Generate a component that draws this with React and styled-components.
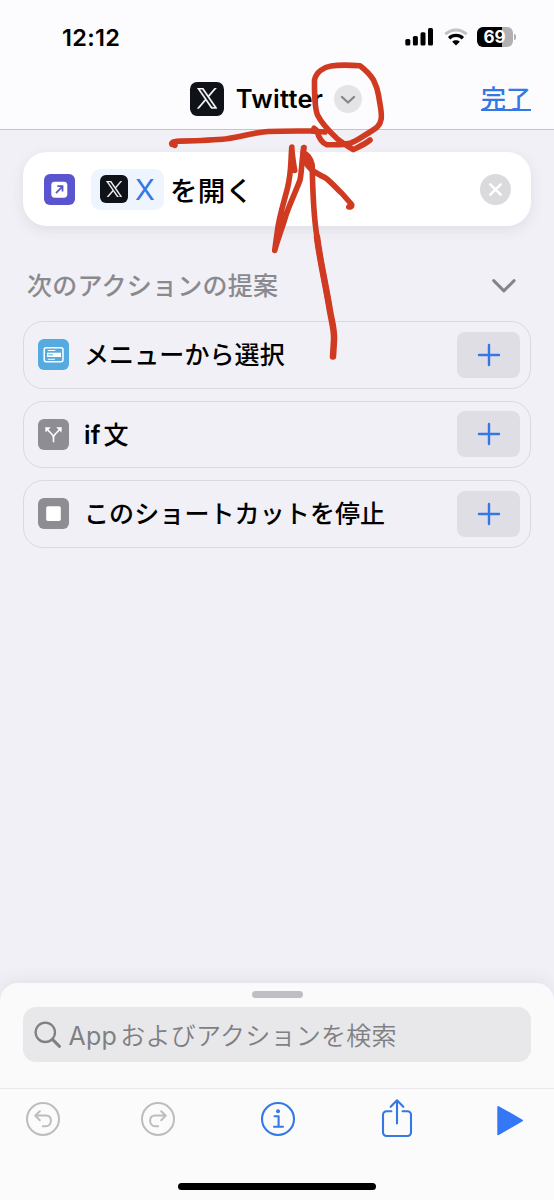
import React from 'react';
import styled, {createGlobalStyle} from 'styled-components';

const suggestions = [
    {id: 'menu', label: 'メニューから選択', color: '#55aadf', Icon: MenuGlyph},
    {id: 'if', latin: 'if', label: '文', color: '#8e8d93', Icon: BranchGlyph},
    {id: 'stop', label: 'このショートカットを停止', color: '#8e8d93', Icon: StopGlyph},
];

function XLogo({size}){
    return(
        <XBox $size={size}>
            <svg width='60%' height='60%' viewBox='0 0 24 24' fill='#fff' stroke='#fff' strokeWidth='.5'>
                <path d='M14.23 10.16 22.98 0h-2.07l-7.6 8.82L7.25 0H.26l9.17 13.34L.26 24h2.07l8.02-9.32L16.76 24h6.98zM11.39 13.46l-.93-1.33L3.07 1.56h3.18l5.97 8.54.93 1.33 7.76 11.1h-3.18z'/>
            </svg>
        </XBox>
    );
}

function MenuGlyph(){
    return(
        <svg width='31' height='31' viewBox='0 0 31 31' fill='none'>
            <rect x='6.2' y='8.7' width='18.8' height='14' rx='2' stroke='#fff' strokeWidth='1.5'/>
            <rect x='9' y='13.7' width='14' height='4.3' fill='#fff'/>
            <path d='M9.8 11.5h7.5M9.8 20.2h7.2' stroke='#fff' strokeWidth='1.1'/>
            <path d='M10.2 15.8h4.8' stroke='#55aadf' strokeWidth='1'/>
        </svg>
    );
}

function BranchGlyph(){
    return(
        <svg width='31' height='31' viewBox='0 0 31 31' fill='none'>
            <path d='M15.5 23.3V18.7C15.5 16.8 14.7 15.9 13.5 14.7L9.8 11M15.5 18.7C15.5 16.8 16.3 15.9 17.5 14.7L21.2 11' stroke='#fff' strokeWidth='1.6'/>
            <path d='M7.2 8.2h5.6L7.6 13.6zM23.8 8.2h-5.6l5.2 5.4z' fill='#fff'/>
        </svg>
    );
}

function StopGlyph(){
    return(
        <svg width='31' height='31' viewBox='0 0 31 31'>
            <rect x='8.2' y='8.3' width='14.6' height='14.6' rx='1.6' fill='#fff'/>
        </svg>
    );
}

function StatusBar(){
    return(
        <Status>
            <Clock>12:12</Clock>
            <StatusIcons>
                <svg width='29' height='18' viewBox='0 0 29 18'>
                    <rect x='.3' y='11' width='5' height='6.4' rx='1.5'/>
                    <rect x='7.9' y='8' width='5' height='9.4' rx='1.5'/>
                    <rect x='15.5' y='4.2' width='5' height='13.2' rx='1.5'/>
                    <rect x='23' y='0' width='5' height='17.4' rx='1.5'/>
                </svg>
                <svg width='24' height='18' viewBox='0 0 24 18' fill='none'>
                    <path d='M1.3 6.2C7.5.5 16.5.5 22.7 6.2' stroke='#c1c1c3' strokeWidth='3'/>
                    <path d='M5.1 10.2C9 6.5 15 6.5 18.9 10.2' stroke='#000' strokeWidth='3.3'/>
                    <path d='M8.2 13.7C10.3 11.8 13.7 11.8 15.8 13.7L12 17.4z' fill='#000'/>
                </svg>
                <Battery>69</Battery>
            </StatusIcons>
        </Status>
    );
}

function Toolbar(){
    return(
        <Tools>
            <svg width='36' height='40' viewBox='0 0 36 40' fill='none' stroke='#bdbdbf' strokeWidth='2' strokeLinecap='round' strokeLinejoin='round'>
                <circle cx='18' cy='20' r='16'/>
                <path d='M14.8 12.2 10.2 16.6 14.8 21.2M10.6 16.6h10.2c3.2 0 5.1 2.1 5.1 5.2s-2 5.4-5.1 5.4h-3'/>
            </svg>
            <svg width='36' height='40' viewBox='0 0 36 40' fill='none' stroke='#bdbdbf' strokeWidth='2' strokeLinecap='round' strokeLinejoin='round'>
                <circle cx='18' cy='20' r='16'/>
                <path d='M21.2 12.2 25.8 16.6 21.2 21.2M25.4 16.6H15.2c-3.2 0-5.1 2.1-5.1 5.2s2 5.4 5.1 5.4h3'/>
            </svg>
            <svg width='36' height='40' viewBox='0 0 36 40' fill='none' stroke='#3478e5' strokeWidth='2.1' strokeLinecap='round' strokeLinejoin='round'>
                <circle cx='18' cy='20' r='16'/>
                <path d='M14.6 17.2h4v10.3M14 27.7h9'/>
                <circle cx='18' cy='12.2' r='2' fill='#3478e5' stroke='none'/>
            </svg>
            <svg width='36' height='40' viewBox='0 0 36 40' fill='none' stroke='#3478e5' strokeWidth='2.1' strokeLinecap='round' strokeLinejoin='round'>
                <path d='M12.4 12.2H7.6a3.6 3.6 0 0 0-3.6 3.6v17.6A3.6 3.6 0 0 0 7.6 37h20.8a3.6 3.6 0 0 0 3.6-3.6V15.8a3.6 3.6 0 0 0-3.6-3.6h-4.8M18 24.5V1.5M11.7 7.8 18 1.3l6.3 6.5'/>
            </svg>
            <svg width='36' height='40' viewBox='0 0 36 40' fill='#3478f6' stroke='#3478f6' strokeWidth='2' strokeLinejoin='round'>
                <path d='M7.3 8 31 21.5 7.3 35.2z'/>
            </svg>
        </Tools>
    );
}

// red pen strokes over the header and the action card
function PenMarks(){
    return(
        <Marks width='554' height='400' viewBox='0 0 554 400'>
            <path d='M175 145.3 172 144.4C171 142.4 173.5 141.4 177 141.2 194 140.8 211 140.5 226.7 138.8 244 136.5 253 132.5 268 131.5 283 130.8 297 131 310 131L325 132'/>
            <path d='M370 140C364 145 357 147.5 353.3 149.6 345 144.5 341 142 336.7 138.3 329 131 322 124 317.5 115 314 106 314.5 90 314.5 80 316 72 324 67 331 66 340 64.6 350 65 360 65.7 367 71 371 76 373.5 80 378 89 378 92 379 98 380 105 382 112 381.2 119 380 126 376 128.5 370 132 363 136 357 141 350 143.3 342 145.2 334 145 326.7 144.6 322 143 319 138 317.3 132 316.5 129.8 315.5 129 314 128.2'/>
            <path d='M294.7 170.5C293.5 163 292 155 291.8 147 290.5 162 291.5 172 287.5 188 284 202 279.5 215 277.5 230L274.7 250.5C278 238 283 226 286 215 290 203 296 191 300 180 301.7 173 301.5 160 304 147.6'/>
            <path d='M303.5 148 303.2 156C305 162 308 167 312 170 318 175 323 176 327 179 333 184 337 189 342 193.5L351.7 204.5C352 207 350 207.2 348.8 206.8'/>
            <path d='M303.5 153C309 155 311 160 312.2 165 312.6 189 313 213 317 237 320 261 326 286 329.8 310'/>
            <path d='M317 237C320 261 326 286 329.8 310 332.5 325 334.5 330 334 340L333 356.5' strokeWidth='6.5'/>
        </Marks>
    );
}

function App(){
    return(
        <Screen>
            <GlobalStyle/>
            <Header>
                <StatusBar/>
                <TitleBar>
                    <span/>
                    <TitleGroup>
                        <XLogo size={34}/>
                        <Title>Twitter</Title>
                        <TitleMenu>
                            <svg width='28' height='28' viewBox='0 0 28 28' fill='none' stroke='#858589' strokeWidth='2.3' strokeLinecap='round' strokeLinejoin='round'>
                                <path d='m8 12 6 5.5 6-5.5'/>
                            </svg>
                        </TitleMenu>
                    </TitleGroup>
                    <Done>完了</Done>
                </TitleBar>
            </Header>
            <Main>
                <ActionCard>
                    <IconTile $color='#5a55ce'>
                        <svg width='31' height='31' viewBox='0 0 31 31' fill='none'>
                            <rect x='7.3' y='7.7' width='16' height='16' rx='3.4' fill='#fff'/>
                            <path d='m12 19.2 6.2-6.5M13.3 12.2h5.2v5.4' stroke='#5a55ce' strokeWidth='1.8'/>
                        </svg>
                    </IconTile>
                    <AppToken>
                        <XLogo size={28}/>
                        <span>X</span>
                    </AppToken>
                    <ActionText>を開く</ActionText>
                    <Remove>
                        <svg width='31' height='31' viewBox='0 0 31 31' fill='none' stroke='#fff' strokeWidth='2.5' strokeLinecap='round'>
                            <path d='m10.3 10.3 10.4 10.4M20.7 10.3 10.3 20.7'/>
                        </svg>
                    </Remove>
                </ActionCard>
                <SectionHead>
                    <SectionTitle>次のアクションの提案</SectionTitle>
                    <svg width='24' height='14' viewBox='0 0 24 14' fill='none' stroke='#858589' strokeWidth='3' strokeLinecap='round' strokeLinejoin='round'>
                        <path d='m1.7 1.6 10.2 10.3L22.1 1.6'/>
                    </svg>
                </SectionHead>
                <List>
                    {suggestions.map(({id, latin, label, color, Icon}) => (
                        <Row key={id}>
                            <IconTile $color={color}><Icon/></IconTile>
                            <RowLabel>{latin && <Latin $weight={600}>{latin}</Latin>}{label}</RowLabel>
                            <AddButton>
                                <svg width='24' height='24' viewBox='0 0 24 24' stroke='#3478e5' strokeWidth='2.4' strokeLinecap='round'>
                                    <path d='M12 2v20M2 12h20'/>
                                </svg>
                            </AddButton>
                        </Row>
                    ))}
                </List>
            </Main>
            <Sheet>
                <Grabber/>
                <Search>
                    <svg width='28' height='28' viewBox='0 0 28 28' fill='none' stroke='#7f7f84' strokeLinecap='round'>
                        <circle cx='11.3' cy='11.3' r='9.7' strokeWidth='2.3'/>
                        <path d='m18.7 18.7 6.8 6.6' strokeWidth='3'/>
                    </svg>
                    <SearchText><Latin $weight={400}>App</Latin>およびアクションを検索</SearchText>
                </Search>
            </Sheet>
            <Footer>
                <Toolbar/>
                <HomeBar/>
            </Footer>
            <PenMarks/>
        </Screen>
    );
}

export default App;

const GlobalStyle = createGlobalStyle`
 *{box-sizing:border-box;}
 body{
  margin:0;
  font-family:Inter, 'Noto Sans CJK JP', sans-serif;
  color:#000;
 }
 svg{display:block;flex:none;}
`

const Screen = styled.div`
 position:relative;
 width:554px;
 height:1200px;
 display:flex;
 flex-direction:column;
 background:#f1f0f6;
 overflow:hidden;
 white-space:nowrap;
`

const Header = styled.header`
 height:130px;
 background:#fcfcfe;
 border-bottom:1px solid #c5c5c9;
`

const Status = styled.div`
 height:74px;
 padding:0 41px 0 62px;
 display:flex;
 align-items:center;
 justify-content:space-between;
`

const Clock = styled.div`
 font-size:23.5px;
 font-weight:600;
 letter-spacing:0.3px;
`

const StatusIcons = styled.div`
 display:flex;
 align-items:center;
 gap:9.5px;
`

const Battery = styled.div`
 position:relative;
 width:36px;
 height:20px;
 border-radius:6px;
 background:linear-gradient(90deg, #000 70%, #b0b0b2 70%);
 color:#fff;
 font-size:17px;
 font-weight:700;
 line-height:20px;
 text-align:center;
 padding-right:1px;

 &::after{
  content:'';
  position:absolute;
  right:-3px;
  top:7px;
  width:2px;
  height:6px;
  border-radius:0 2px 2px 0;
  background:#b0b0b2;
 }
`

const TitleBar = styled.div`
 height:49px;
 padding:0 23px 0 21px;
 display:grid;
 grid-template-columns:1fr auto 1fr;
 align-items:center;
`

const TitleGroup = styled.div`
 display:flex;
 align-items:center;
`

const XBox = styled.div`
 width:${p => p.$size}px;
 height:${p => p.$size}px;
 flex:none;
 display:flex;
 align-items:center;
 justify-content:center;
 border-radius:${p => p.$size * 0.21}px;
 background:#0f1319;
`

const Title = styled.h1`
 margin:0 11px 0 12px;
 font-size:25.5px;
 font-weight:600;
 line-height:34px;
 letter-spacing:0.3px;
`

const TitleMenu = styled.div`
 width:28px;
 height:28px;
 border-radius:50%;
 background:#e4e4e6;
`

const Done = styled.div`
 justify-self:end;
 color:#3478e5;
 font-size:25px;
 line-height:34px;
 font-weight:500;
 text-decoration:underline;
 text-decoration-thickness:1.5px;
 text-underline-offset:1px;
 text-decoration-skip-ink:none;
`

const Main = styled.main`
 flex:1;
 padding:22px 23px 0;
`

const ActionCard = styled.div`
 height:74px;
 padding:0 20px 0 21px;
 display:flex;
 align-items:center;
 border-radius:24px;
 background:#fff;
 box-shadow:0 4px 14px rgba(60, 60, 90, 0.09);
`

const IconTile = styled.div`
 width:31px;
 height:31px;
 flex:none;
 border-radius:6px;
 background:${p => p.$color};
`

const AppToken = styled.div`
 height:41px;
 width:73px;
 margin-left:16px;
 padding-left:9px;
 display:flex;
 align-items:center;
 gap:7px;
 border-radius:9px;
 background:#eff5fe;
 color:#3478e5;
 font-size:29px;
`

const ActionText = styled.div`
 flex:1;
 margin-left:6px;
 padding-top:4px;
 font-size:27.5px;
 font-weight:500;
 line-height:38px;
 letter-spacing:0.3px;
`

const Remove = styled.div`
 width:31px;
 height:31px;
 border-radius:50%;
 background:#dadadc;
`

const SectionHead = styled.div`
 height:95px;
 padding:25px 15px 0 4px;
 display:flex;
 align-items:center;
 justify-content:space-between;
`

const SectionTitle = styled.h2`
 margin:0;
 color:#8a8a8e;
 font-size:25px;
 font-weight:500;
 line-height:36px;
 letter-spacing:0.25px;
`

const List = styled.div`
 display:grid;
 gap:12px;
`

const Row = styled.div`
 height:67.6px;
 padding:0 10px 0 14px;
 display:flex;
 align-items:center;
 border:1.5px solid #dad9df;
 border-radius:20px;
`

const RowLabel = styled.div`
 flex:1;
 margin-left:15px;
 padding-top:1px;
 font-size:25px;
 font-weight:500;
 line-height:36px;
 letter-spacing:0.1px;
`

const AddButton = styled.div`
 width:63px;
 height:46px;
 display:flex;
 align-items:center;
 justify-content:center;
 border-radius:8px;
 background:#dfdee4;
`

const Sheet = styled.section`
 height:105px;
 padding:8px 23px 0;
 border-radius:18px 18px 0 0;
 background:#fafafb;
 box-shadow:0 -3px 16px rgba(60, 60, 90, 0.08);
`

const Grabber = styled.div`
 width:51px;
 height:7px;
 margin:0 auto 9px;
 border-radius:4px;
 background:#bebec3;
`

const Search = styled.div`
 height:55px;
 padding-left:10.5px;
 display:flex;
 align-items:center;
 gap:7px;
 border-radius:13px;
 background:#e8e8eb;
`

const SearchText = styled.div`
 color:#7f7f84;
 font-family:'Noto Sans CJK JP', sans-serif;
 font-size:25px;
 font-weight:350;
 line-height:36px;
 letter-spacing:0.25px;
`

const Latin = styled.span`
 margin-right:3px;
 font-family:Inter, sans-serif;
 font-weight:${p => p.$weight};
`

const Footer = styled.footer`
 height:112px;
 border-top:1px solid #e9e9eb;
 background:#fbfbfc;
`

const Tools = styled.div`
 height:94px;
 padding:10px 26px 0 24.5px;
 display:grid;
 grid-template-columns:115.5px 119.5px 119px 112px 36px;
`

const HomeBar = styled.div`
 width:198px;
 height:7px;
 margin:0 auto;
 border-radius:4px;
 background:#000;
`

const Marks = styled.svg`
 position:absolute;
 left:0;
 top:0;
 fill:none;
 stroke:#cf3a20;
 stroke-width:5.6;
 stroke-linecap:round;
 stroke-linejoin:round;
 pointer-events:none;
`
